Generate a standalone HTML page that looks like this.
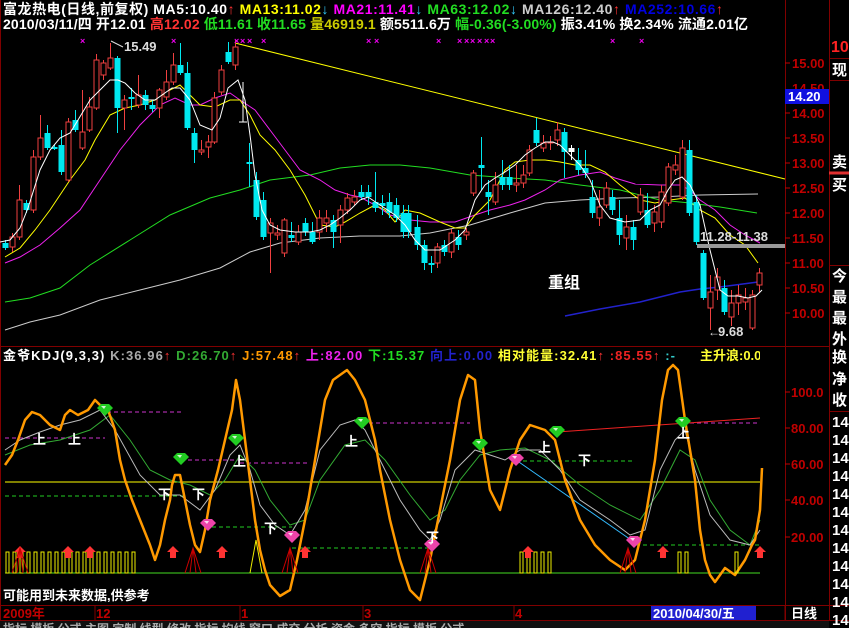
<!DOCTYPE html>
<html><head><meta charset="utf-8"><style>
html,body{margin:0;padding:0;background:#000;width:849px;height:628px;overflow:hidden}
svg{display:block}
text{font-family:"Liberation Sans","Noto Sans CJK SC",sans-serif;font-weight:bold}
</style></head><body>
<svg id="s" width="849" height="628" viewBox="0 0 849 628" xmlns="http://www.w3.org/2000/svg">
<rect width="849" height="628" fill="#000"/>
<g stroke="#800000" stroke-width="1" fill="none">
<line x1="785.5" y1="0" x2="785.5" y2="621"/>
<line x1="829.5" y1="0" x2="829.5" y2="621"/>
<line x1="0" y1="346.5" x2="829" y2="346.5"/>
<line x1="0" y1="605.5" x2="849" y2="605.5"/>
<line x1="0" y1="620.5" x2="849" y2="620.5"/>
<line x1="829" y1="58.5" x2="849" y2="58.5"/>
<line x1="829" y1="80.5" x2="849" y2="80.5"/>
<line x1="829" y1="265.5" x2="849" y2="265.5"/>
<line x1="829" y1="411.5" x2="849" y2="411.5"/>
<line x1="0.5" y1="0" x2="0.5" y2="621"/>
</g>
<line x1="829" y1="173" x2="849" y2="173" stroke="#e03030" stroke-width="3"/>
<text x="3" y="14" font-size="14" fill="#fff" textLength="720" lengthAdjust="spacing">富龙热电(日线,前复权) MA5:10.40<tspan fill="#f33">↑</tspan> <tspan fill="#ff0">MA13:11.02</tspan><tspan fill="#3cf">↓</tspan> <tspan fill="#f0f">MA21:11.41</tspan><tspan fill="#3cf">↓</tspan> <tspan fill="#2d2">MA63:12.02</tspan><tspan fill="#3cf">↓</tspan> <tspan fill="#ccc">MA126:12.40</tspan><tspan fill="#f33">↑</tspan> <tspan fill="#0000e0">MA252:10.66</tspan><tspan fill="#f33">↑</tspan></text>
<text x="3" y="29" font-size="14" fill="#fff" textLength="745" lengthAdjust="spacing">2010/03/11/四 开12.01 <tspan fill="#f33">高12.02</tspan> <tspan fill="#2d2">低11.61 收11.65</tspan> <tspan fill="#cc0">量46919.1</tspan> 额5511.6万 <tspan fill="#2d2">幅-0.36(-3.00%)</tspan> 振3.41% 换2.34% 流通2.01亿</text>
<g font-size="13" fill="#c00000" stroke="none">
<text x="792" y="68">15.00</text><text x="792" y="118">14.00</text><text x="792" y="143">13.50</text><text x="792" y="168">13.00</text><text x="792" y="193">12.50</text><text x="792" y="218">12.00</text><text x="792" y="243">11.50</text><text x="792" y="268">11.00</text><text x="792" y="293">10.50</text><text x="792" y="318">10.00</text>
<text x="792" y="93">14.50</text>
</g>
<g stroke="#c00000"><line x1="785" y1="63" x2="790" y2="63"/><line x1="785" y1="113" x2="790" y2="113"/><line x1="785" y1="138" x2="790" y2="138"/><line x1="785" y1="163" x2="790" y2="163"/><line x1="785" y1="188" x2="790" y2="188"/><line x1="785" y1="213" x2="790" y2="213"/><line x1="785" y1="238" x2="790" y2="238"/><line x1="785" y1="263" x2="790" y2="263"/><line x1="785" y1="288" x2="790" y2="288"/><line x1="785" y1="313" x2="790" y2="313"/>
<line x1="785" y1="392" x2="790" y2="392"/><line x1="785" y1="428" x2="790" y2="428"/><line x1="785" y1="464" x2="790" y2="464"/><line x1="785" y1="500" x2="790" y2="500"/><line x1="785" y1="537" x2="790" y2="537"/></g>
<rect x="785" y="89" width="44" height="15" fill="#1010e0"/>
<text x="788" y="101" font-size="13" fill="#fff">14.20</text>
<g font-size="15" fill="#fff" font-weight="normal">
<text x="831" y="52" fill="#f22" font-size="16">10</text>
<text x="832" y="75">现</text><text x="832" y="167">卖</text><text x="832" y="190">买</text>
<text x="832" y="281">今</text><text x="832" y="302">最</text><text x="832" y="323">最</text><text x="832" y="344">外</text>
<text x="832" y="362">换</text><text x="832" y="384">净</text><text x="832" y="405">收</text>
<text x="832" y="427">14</text><text x="832" y="445">14</text><text x="832" y="463">14</text><text x="832" y="481">14</text><text x="832" y="499">14</text><text x="832" y="517">14</text><text x="832" y="535">14</text><text x="832" y="553">14</text><text x="832" y="571">14</text><text x="832" y="589">14</text><text x="832" y="607">14</text><text x="832" y="625">14</text>
</g>
<g font-size="13" fill="#c00000"><text x="791" y="397">100.0</text><text x="791" y="433">80.00</text><text x="791" y="469">60.00</text><text x="791" y="505">40.00</text><text x="791" y="542">20.00</text></g>
<line x1="235" y1="43" x2="785" y2="179" stroke="#ff0" stroke-width="1"/>
<g fill="none" stroke-width="1">
<polyline stroke="#ccc" points="5,330 30,322 60,315 100,300 140,290 180,280 220,268 250,252 280,243 320,238 360,236 400,236 430,233 470,225 510,213 545,203 580,200 620,198 660,197 700,195 758,194"/>
<polyline stroke="#2d2" points="5,302 30,298 60,288 90,265 130,240 170,215 210,198 240,190 270,180 310,175 340,168 370,165 400,165 430,168 470,175 510,178 545,180 580,185 620,190 660,200 690,203 720,207 757,213"/>
<polyline stroke="#22c" stroke-width="1.5" points="565,316 600,309 640,302 680,292 700,289 720,287 758,282"/>
<polyline stroke="#e2e" points="5,263 20,257 40,245 60,228 80,210 100,180 120,150 140,125 160,105 175,98 190,105 200,105 215,98 230,93 240,100 255,110 270,130 285,150 300,170 320,180 335,190 350,195 360,197 375,205 390,215 410,220 430,222 455,222 475,215 490,210 510,205 525,200 545,190 560,180 580,175 600,172 615,178 635,184 660,185 680,185 690,190 700,200 715,210 730,225 745,235 760,243"/>
<polyline stroke="#ff0" points="5,257 20,248 35,230 50,210 70,180 85,160 95,140 110,115 125,108 140,105 155,100 170,90 180,85 190,95 200,105 215,107 230,100 240,100 250,115 260,135 275,150 290,170 305,195 320,225 335,227 345,222 360,213 375,205 385,210 395,222 405,210 420,213 440,222 455,228 465,228 475,215 490,200 505,170 515,162 530,160 545,160 560,162 575,165 590,165 605,172 620,185 640,200 655,203 670,200 685,198 700,210 715,218 730,235 745,245 758,263"/>
</g>
<g id="candles"></g>
<polyline fill="none" stroke="#fff" stroke-width="1" points="0,242 10,240 20,228 28,208 40,170 50,150 60,138 70,133 78,120 90,100 100,90 110,80 118,80 125,83 135,93 145,100 155,100 162,95 172,88 180,88 190,100 200,125 212,130 220,118 228,88 238,80 245,100 250,135 255,175 262,210 270,225 280,230 295,232 310,232 320,230 330,225 340,218 350,210 360,200 368,197 380,205 395,215 405,225 415,240 425,250 440,250 455,240 465,230 475,200 485,185 495,178 505,172 515,165 525,155 535,148 545,142 553,142 560,145 570,155 580,165 590,180 600,205 610,218 625,222 640,220 650,210 660,205 668,190 675,180 682,177 690,185 700,205 710,250 720,290 728,296 738,296 748,298 756,296 762,290"/>
<line x1="243" y1="82" x2="243" y2="122" stroke="#fff"/><line x1="239" y1="122" x2="247" y2="122" stroke="#fff"/>
<rect x="697" y="244" width="88" height="4" fill="#999"/>
<text x="700" y="241" font-size="13" fill="#ddd">11.28-11.38</text>
<text x="124" y="51" font-size="13" fill="#ddd">15.49</text>
<line x1="111" y1="41" x2="123" y2="47" stroke="#ddd"/>
<text x="718" y="336" font-size="13" fill="#ddd">9.68</text>
<text x="708" y="336" font-size="12" fill="#ddd">←</text>
<text x="548" y="288" font-size="16" fill="#fff" font-weight="normal">重组</text>
<g fill="#e0e" font-size="9" font-weight="normal" id="xs"></g>
<text x="3" y="360" font-size="13" fill="#fff" textLength="672" lengthAdjust="spacing">金爷KDJ(9,3,3) <tspan fill="#aaa">K:36.96</tspan><tspan fill="#f33">↑</tspan> <tspan fill="#3a3">D:26.70</tspan><tspan fill="#f33">↑</tspan> <tspan fill="#f90">J:57.48</tspan><tspan fill="#f33">↑</tspan> <tspan fill="#e2e">上:82.00</tspan> <tspan fill="#2d2">下:15.37</tspan> <tspan fill="#22c">向上:0.00</tspan> <tspan fill="#ff3">相对能量:32.41</tspan><tspan fill="#f33">↑</tspan> <tspan fill="#e22">:85.55</tspan><tspan fill="#f33">↑</tspan> <tspan fill="#3cc">:-</tspan></text>
<text x="700" y="360" font-size="13" fill="#ff3">主升浪:0.0</text>
<rect x="760" y="348" width="25" height="16" fill="#000"/>
<g stroke-width="1" fill="none">
<line x1="5" y1="482" x2="760" y2="482" stroke="#ff0"/>
<line x1="5" y1="573" x2="760" y2="573" stroke="#4d2"/>
<g stroke="#c3c" stroke-dasharray="4,3"><line x1="5" y1="438" x2="105" y2="438"/><line x1="107" y1="412" x2="182" y2="412"/><line x1="188" y1="460" x2="240" y2="460"/><line x1="240" y1="463" x2="310" y2="463"/><line x1="362" y1="423" x2="470" y2="423"/><line x1="683" y1="423" x2="760" y2="423"/></g>
<line x1="557" y1="432" x2="760" y2="418" stroke="#e22"/>
<g stroke="#2c2" stroke-dasharray="4,3"><line x1="5" y1="496" x2="185" y2="496"/><line x1="212" y1="527" x2="292" y2="527"/><line x1="292" y1="548" x2="432" y2="548"/><line x1="516" y1="461" x2="635" y2="461"/><line x1="636" y1="545" x2="760" y2="545"/></g>
<line x1="516" y1="460" x2="634" y2="542" stroke="#3bf"/>
<polyline stroke="#3a3" points="5,455 30,445 60,440 90,430 110,415 130,440 150,470 170,480 190,485 210,495 225,480 240,455 255,470 270,500 290,525 305,520 320,480 345,445 365,440 385,460 410,495 430,520 445,510 460,480 480,455 500,450 525,448 550,460 580,485 610,505 640,520 660,490 680,450 695,460 710,500 730,530 750,545 760,520"/>
<polyline stroke="#bbb" points="5,450 20,440 40,432 60,425 80,420 100,410 115,430 140,475 160,495 180,495 200,510 215,490 230,455 240,445 250,470 260,505 275,525 290,535 305,510 320,450 340,425 355,420 365,430 380,460 400,500 420,530 430,540 440,520 455,470 475,450 490,455 505,460 520,450 540,450 560,470 580,500 610,520 630,535 645,530 660,470 675,440 685,430 695,470 710,515 730,540 750,545 760,530"/>
<polyline stroke="#f90" stroke-width="2.5" stroke-linejoin="round" points="5,465 12,455 18,440 25,420 32,412 40,415 50,425 60,430 65,415 70,410 78,415 88,410 95,400 100,405 108,410 115,430 120,460 125,480 132,500 140,520 150,545 155,560 160,545 165,520 170,500 172,485 175,475 180,475 185,500 190,525 195,545 200,552 205,530 210,500 218,470 225,440 232,410 236,380 240,400 245,440 250,480 255,520 260,550 265,570 270,585 280,596 290,590 297,560 305,520 315,460 325,400 333,380 340,375 347,370 355,380 365,400 370,420 375,440 380,470 390,520 400,560 410,590 420,600 430,560 440,510 450,460 460,400 468,375 475,380 480,430 485,460 490,490 500,510 510,470 520,440 530,425 545,430 555,440 565,480 580,520 595,545 610,560 625,570 635,560 645,520 655,460 662,400 668,370 673,365 678,370 685,420 695,480 700,530 705,560 710,575 715,582 725,568 735,575 745,560 752,545 755,540 760,510 762,468"/>
</g>
<g id="bars"></g>
<g id="gems"></g>
<g font-size="13" fill="#fff" font-weight="normal"><text x="33" y="444">上</text><text x="68" y="444">上</text><text x="233" y="466">上</text><text x="345" y="446">上</text><text x="538" y="452">上</text><text x="677" y="438">上</text><text x="158" y="499">下</text><text x="192" y="499">下</text><text x="264" y="533">下</text><text x="426" y="542">下</text><text x="578" y="465">下</text></g>
<text x="3" y="600" font-size="13" fill="#fff" font-weight="normal">可能用到未来数据,供参考</text>
<g font-size="13" fill="#c00000"><text x="3" y="618">2009年</text><text x="96" y="618">12</text><text x="241" y="618">1</text><text x="364" y="618">3</text><text x="515" y="618">4</text></g>
<g stroke="#800000"><line x1="95" y1="606" x2="95" y2="620"/><line x1="240" y1="606" x2="240" y2="620"/><line x1="363" y1="606" x2="363" y2="620"/><line x1="514" y1="606" x2="514" y2="620"/><line x1="785" y1="606" x2="785" y2="620"/></g>
<rect x="651" y="606" width="105" height="14" fill="#2020d0"/>
<text x="653" y="618" font-size="13" fill="#fff">2010/04/30/五</text>
<text x="791" y="618" font-size="13" fill="#fff" font-weight="normal">日线</text>
<rect x="0" y="621" width="829" height="7" fill="#111"/>
<text x="3" y="633" font-size="12" fill="#aaa" font-weight="normal">指标 模板 公式 主图 定制 线型 修改 指标 均线 窗口 成交 分析 资金 多空 指标 模板 公式</text>
</svg>
<script>
var C=[[5,243,248,240,250,'c'],[12,237,247,233,252,'r'],[19,200,237,185,240,'r'],[26,203,210,200,213,'c'],[33,157,210,150,213,'r'],[40,138,157,115,160,'r'],[47,133,148,125,150,'c'],[54,147,149,145,150,'c'],[61,145,172,130,175,'c'],[68,122,180,118,182,'r'],[75,120,130,110,132,'c'],[82,132,148,90,150,'r'],[89,107,130,97,132,'r'],[96,60,108,54,110,'r'],[103,63,75,60,80,'r'],[110,58,68,43,70,'r'],[117,58,108,56,133,'c'],[124,100,108,95,130,'r'],[131,97,99,88,110,'c'],[138,95,105,75,108,'r'],[145,95,105,90,110,'c'],[152,105,109,100,112,'c'],[159,90,108,88,118,'r'],[166,82,97,70,100,'r'],[173,65,82,53,85,'r'],[180,65,73,43,75,'c'],[187,73,128,62,130,'c'],[194,133,150,128,163,'c'],[201,150,152,140,155,'r'],[208,142,147,135,158,'r'],[214,98,142,92,144,'r'],[221,70,92,65,95,'r'],[228,52,62,42,64,'c'],[235,47,65,40,70,'r'],[249,162,164,143,187,'c'],[256,180,217,172,220,'c'],[263,200,237,192,240,'c'],[270,223,233,218,273,'r'],[277,233,235,225,240,'r'],[284,220,253,218,257,'r'],[291,235,238,222,242,'c'],[298,232,242,225,245,'r'],[305,223,232,218,236,'c'],[312,232,242,222,244,'c'],[319,218,232,210,240,'r'],[326,218,223,210,232,'r'],[333,220,232,215,248,'c'],[340,210,225,205,243,'r'],[347,198,210,193,214,'r'],[354,197,202,190,205,'r'],[361,192,197,185,200,'c'],[368,192,197,185,205,'c'],[375,202,208,172,212,'c'],[382,203,206,195,215,'c'],[389,202,213,193,218,'c'],[396,205,218,198,222,'c'],[403,213,232,205,238,'c'],[408,213,232,205,238,'c'],[417,227,245,215,250,'c'],[424,245,263,240,270,'c'],[431,263,265,256,273,'c'],[437,247,263,243,268,'r'],[444,245,252,240,256,'c'],[451,233,252,229,258,'r'],[458,237,245,230,250,'c'],[466,232,235,228,240,'r'],[473,173,193,170,196,'r'],[481,165,168,137,190,'c'],[488,192,197,180,215,'c'],[495,185,202,172,205,'r'],[502,177,185,160,190,'c'],[509,177,185,165,190,'c'],[516,183,185,165,192,'r'],[523,175,183,165,188,'r'],[529,150,173,145,176,'r'],[536,130,143,118,146,'c'],[543,143,148,135,152,'r'],[550,142,143,136,150,'r'],[557,130,140,122,146,'r'],[564,132,152,128,178,'c'],[571,148,152,145,160,'w'],[578,160,170,148,175,'c'],[585,168,173,150,178,'c'],[592,197,213,180,218,'c'],[599,207,218,190,226,'r'],[606,188,205,182,208,'r'],[612,197,210,190,215,'c'],[619,218,235,200,245,'c'],[626,227,238,215,250,'r'],[633,227,240,220,250,'c'],[640,195,212,188,215,'r'],[647,210,225,193,228,'c'],[654,212,223,205,232,'r'],[661,192,222,185,228,'r'],[668,167,203,163,206,'r'],[675,165,170,155,175,'r'],[682,148,197,140,200,'r'],[689,150,213,140,216,'c'],[696,202,242,195,245,'c'],[703,253,298,250,300,'c'],[710,292,308,275,330,'r'],[717,277,290,268,300,'r'],[724,288,312,280,315,'c'],[731,303,317,290,326,'r'],[738,295,303,285,315,'r'],[745,298,302,288,310,'r'],[752,295,328,290,330,'r'],[759,273,285,268,292,'r']];
var g=document.getElementById('candles'),h='';
C.forEach(function(c){var x=c[0],col=c[5]=='r'?'#f04040':(c[5]=='c'?'#00e8f0':'#fff');
h+='<line x1="'+(x+.5)+'" y1="'+c[3]+'" x2="'+(x+.5)+'" y2="'+c[4]+'" stroke="'+col+'"/>';
if(c[5]=='r')h+='<rect x="'+(x-2)+'" y="'+c[1]+'" width="5" height="'+Math.max(1,c[2]-c[1])+'" fill="#000" stroke="'+col+'"/>';
else h+='<rect x="'+(x-2.5)+'" y="'+c[1]+'" width="6" height="'+Math.max(1,c[2]-c[1])+'" fill="'+col+'"/>';});
g.innerHTML=h;
var xs=[83,174,237,243,250,264,369,377,439,460,467,473,480,487,493,613,642],s='';
xs.forEach(function(x){s+='<text x="'+(x-3)+'" y="44">×</text>'});document.getElementById('xs').innerHTML=s;
var b='';for(var x=6;x<=132;x+=7)b+='<rect x="'+x+'" y="552" width="3" height="21" fill="none" stroke="#ee0"/>';
[520,527,534,541,548,678,685,735].forEach(function(x){b+='<rect x="'+x+'" y="552" width="3" height="21" fill="none" stroke="#ee0"/>'});
b+='<polyline points="250,573 256,540 262,573" fill="none" stroke="#ee0"/>';
[[20,552],[68,552],[90,552],[173,552],[222,552],[305,552],[528,552],[663,552],[760,552]].forEach(function(p){b+='<path d="M'+p[0]+' '+(p[1]-6)+'l6 6h-3v6h-6v-6h-3z" fill="#f33"/>'});
[[20,548],[193,548],[290,548],[428,548],[628,548]].forEach(function(p){b+='<path d="M'+(p[0]-8)+' 573L'+p[0]+' '+p[1]+'L'+(p[0]+8)+' 573M'+(p[0]-3)+' 573L'+p[0]+' '+p[1]+'L'+(p[0]+3)+' 573" fill="none" stroke="#c00"/>'});
document.getElementById('bars').innerHTML=b;
var gm='';[[105,410,'#2c2'],[181,459,'#2c2'],[236,440,'#2c2'],[362,423,'#2c2'],[480,445,'#2c2'],[557,432,'#2c2'],[683,423,'#2c2'],[208,525,'#e4a'],[292,537,'#e4a'],[432,546,'#e4a'],[516,460,'#e4a'],[634,542,'#e4a']].forEach(function(p){gm+='<path d="M'+(p[0]-8)+' '+(p[1]-2)+'l4 -4h8l4 4l-8 8z" fill="'+p[2]+'"/><path d="M'+(p[0]-4)+' '+(p[1]-4)+'h5l-2 3z" fill="#fff" opacity=".8"/>'});
document.getElementById('gems').innerHTML=gm;
</script>
</body></html>
